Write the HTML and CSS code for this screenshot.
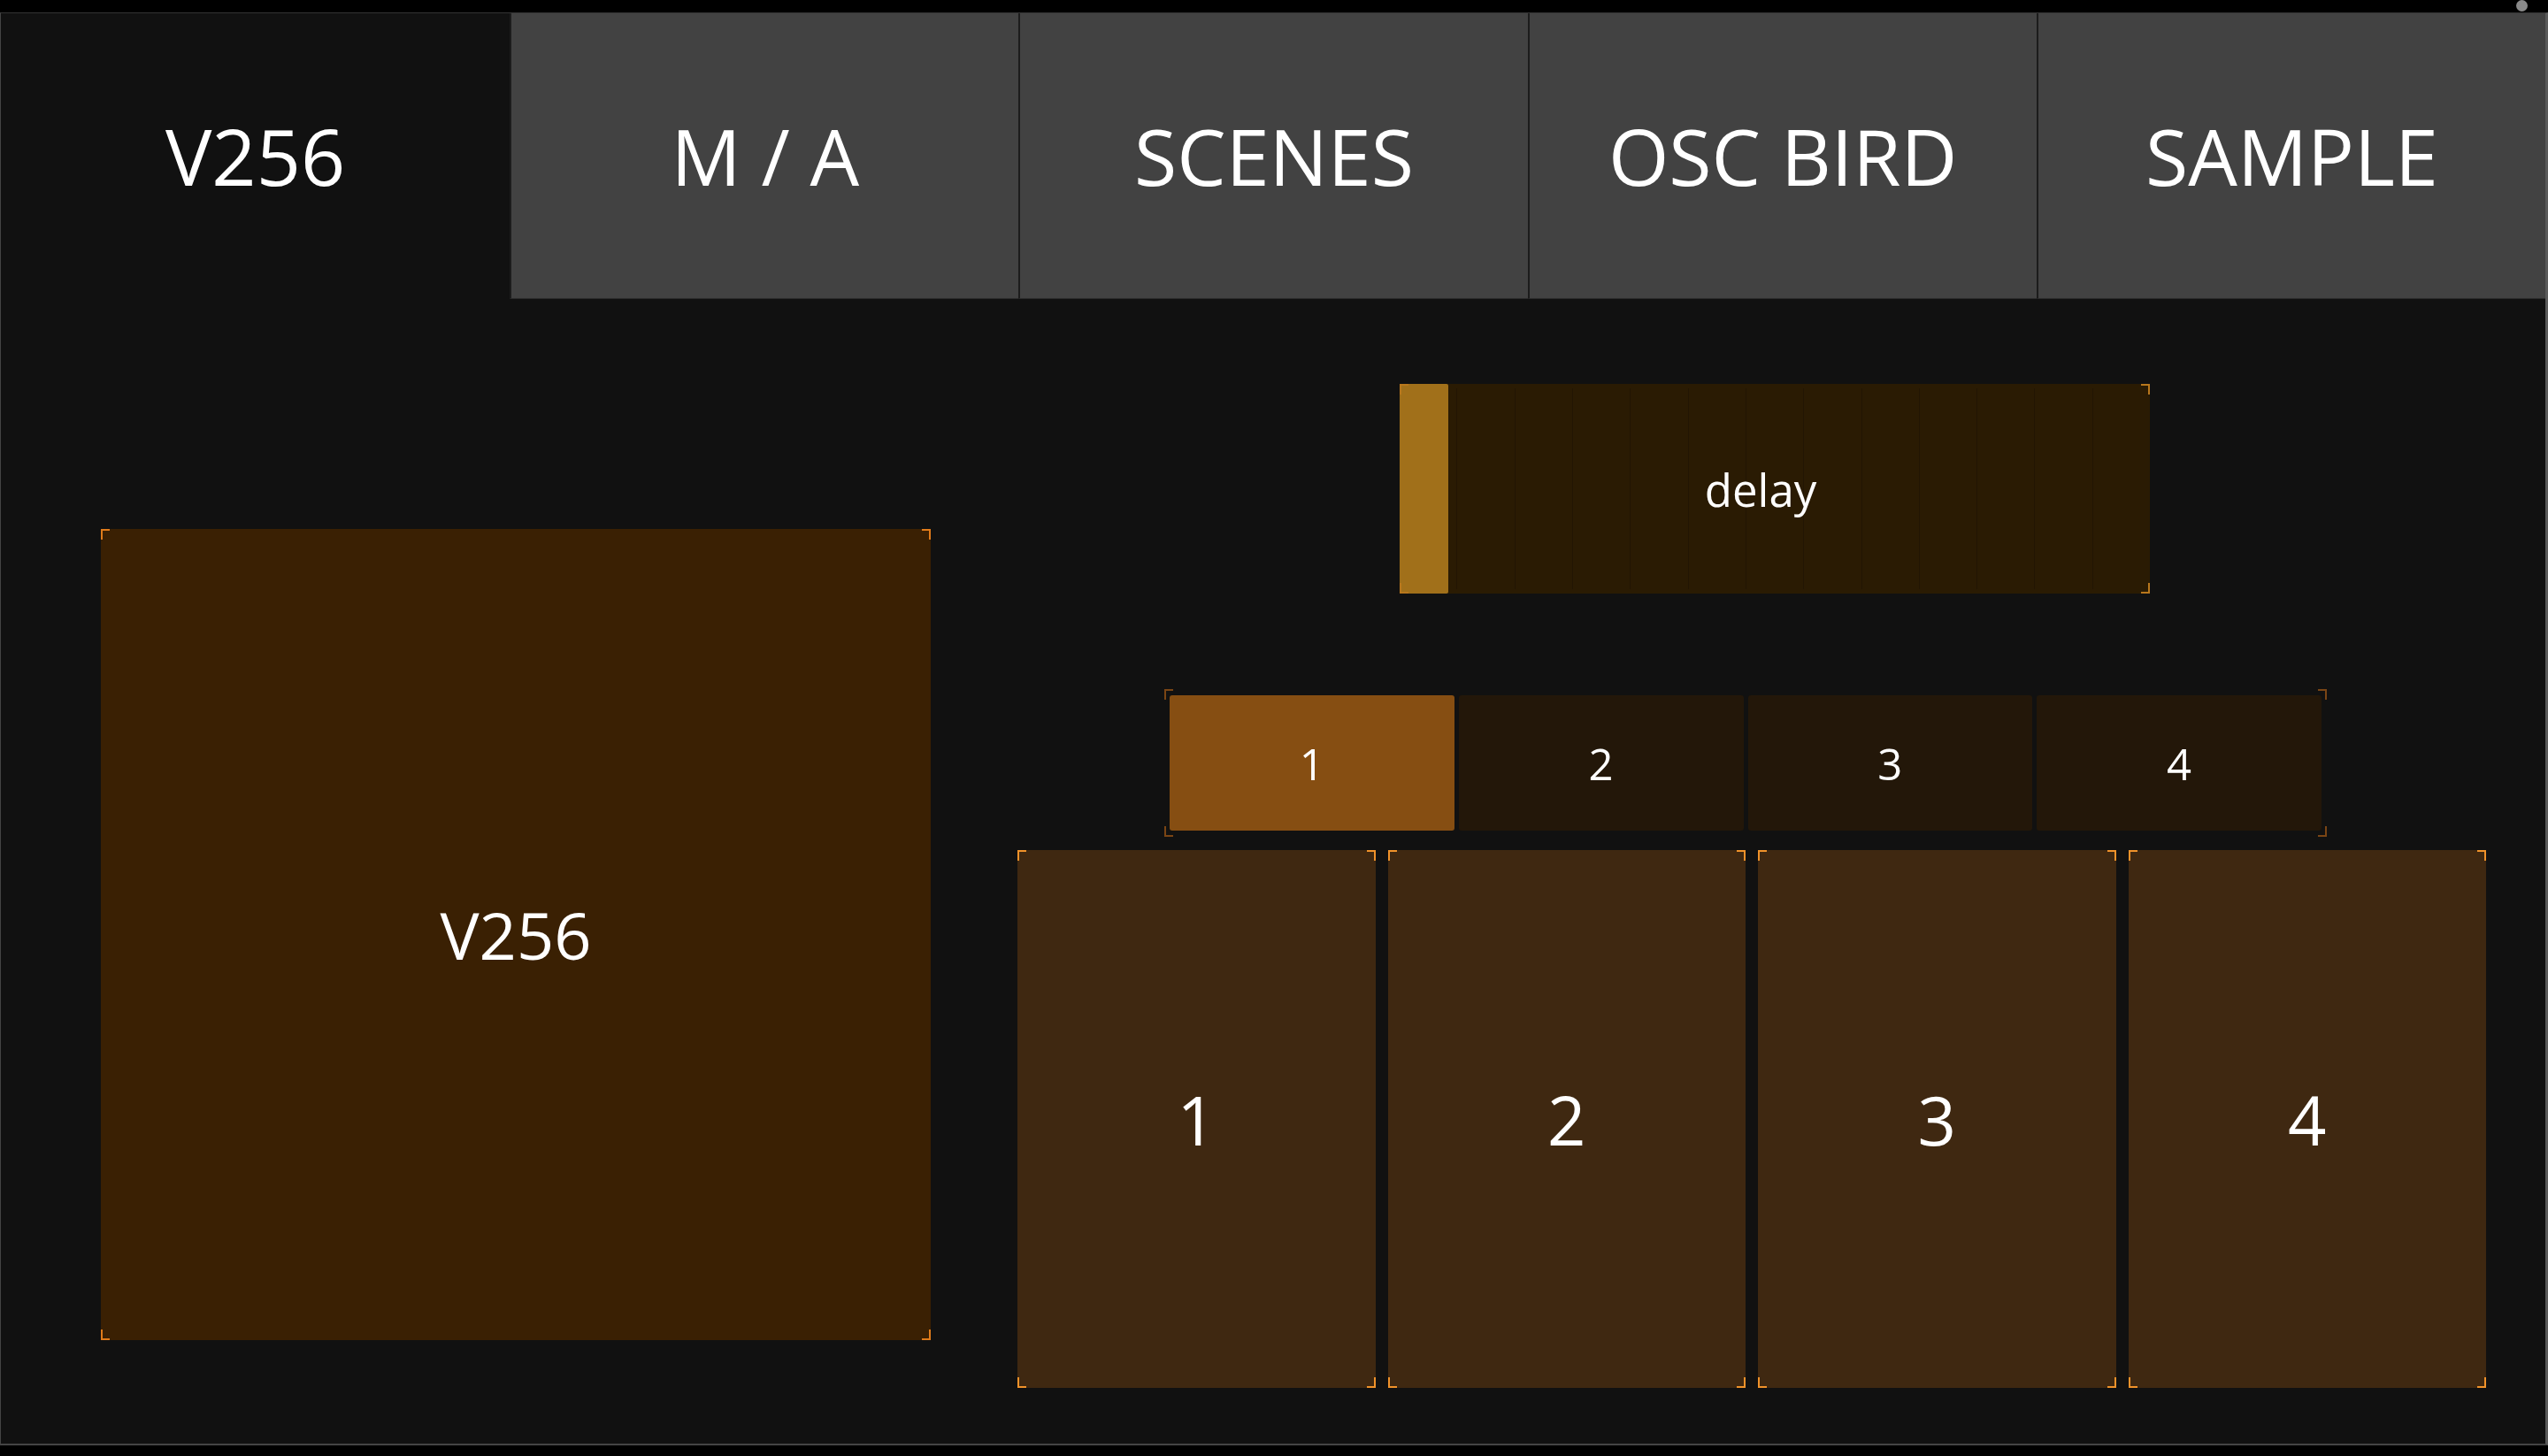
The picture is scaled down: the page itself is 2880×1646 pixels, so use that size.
FILE: index.html
```html
<!DOCTYPE html>
<html lang="en">
<head>
  <meta charset="UTF-8" />
  <title>V256 - Control Surface</title>
  <link rel="stylesheet" href="styles.css">
</head>
<body>

  <div class="topbar">
    <span class="dot"></span>
  </div>

  <div class="panel">
    <nav class="tabs">
      <div class="tab active">V256</div>
      <div class="tab">M / A</div>
      <div class="tab">SCENES</div>
      <div class="tab">OSC BIRD</div>
      <div class="tab">SAMPLE</div>
    </nav>

    <div class="stage">
      <div class="col-left">
        <div class="big-pad corners">V256</div>
      </div>

      <div class="col-right">
        <div class="fader corners">
          <div class="ticks">
            <span></span><span></span><span></span><span></span><span></span>
            <span></span><span></span><span></span><span></span><span></span>
            <span></span><span></span><span></span>
          </div>
          <div class="fill" style="width: 55px"></div>
          <div class="fader-label">delay</div>
        </div>

        <div class="segment corners">
          <div class="seg on">1</div>
          <div class="seg">2</div>
          <div class="seg">3</div>
          <div class="seg">4</div>
        </div>

        <div class="pads">
          <div class="pad corners">1</div>
          <div class="pad corners">2</div>
          <div class="pad corners">3</div>
          <div class="pad corners">4</div>
        </div>
      </div>
    </div>
  </div>

</body>
</html>
```

FILE: styles.css
```css
body {
  font-family: 'Open Sans', 'Noto Sans', sans-serif;
  background: #000;
  color: white;
  margin: 0;
  padding: 0;
  height: 1646px;
  overflow: hidden;
}

.topbar {
  height: 14px;
  display: flex;
  justify-content: flex-end;
  padding-right: 23px;
}

.dot {
  width: 13px;
  height: 13px;
  border-radius: 50%;
  background: #8a8a8a;
}

.panel {
  height: 1617px;
  background: #111;
  border-top: 1px solid #333;
  border-left: 1px solid #444;
  border-right: 3px solid #5a5a5a;
  border-bottom: 2px solid #444;
}

/* tabs */

.tabs {
  display: grid;
  grid-template-columns: repeat(5, 1fr);
  height: 323px;
}

.tab {
  background: #424242;
  border-left: 2px solid #1c1c1c;
  border-bottom: 1px solid #2c2c2c;
  display: flex;
  align-items: center;
  justify-content: center;
  font-size: 88px;
}

.tab.active {
  background: #111;
  border-left: none;
  border-bottom-color: #111;
}

/* canvas */

.stage {
  display: flex;
  gap: 98px;
  padding-left: 113px;
}

.col-left {
  padding-top: 260px;
}

.big-pad {
  width: 938px;
  height: 917px;
  background: #3a2003;
  display: flex;
  align-items: center;
  justify-content: center;
  font-size: 74px;
  --c: #e07b1a;
}

.col-right {
  width: 1660px;
  padding-top: 96px;
  display: flex;
  flex-direction: column;
}

/* fader */

.fader {
  margin-left: 432px;
  width: 848px;
  height: 237px;
  background: #2a1b03;
  display: grid;
  --c: #b8771c;
}

.fader > * {
  grid-area: 1 / 1;
}

.ticks {
  display: flex;
  padding: 5px 0;
}

.ticks span {
  flex: 1;
  border-right: 1px solid #221503;
}

.ticks span:last-child {
  border-right: none;
}

.fill {
  background: #a1701a;
  border-radius: 2px;
}

.fader-label {
  display: flex;
  align-items: center;
  justify-content: center;
  padding-right: 32px;
  font-size: 51px;
}

/* segment */

.segment {
  margin-top: 108px;
  margin-left: 166px;
  width: 1302px;
  height: 153px;
  padding: 7px 6px;
  display: grid;
  grid-template-columns: repeat(4, 1fr);
  gap: 5px;
  --c: #7a4514;
}

.seg {
  background: #231709;
  border-radius: 3px;
  display: flex;
  align-items: center;
  justify-content: center;
  font-size: 49px;
}

.seg.on {
  background: #864e12;
}

/* pads */

.pads {
  margin-top: 15px;
  display: grid;
  grid-template-columns: repeat(4, 1fr);
  gap: 14px;
}

.pad {
  height: 608px;
  background: #3f2811;
  display: flex;
  align-items: center;
  justify-content: center;
  font-size: 76px;
  --c: #f0922a;
}

/* corner brackets */

.corners {
  position: relative;
}

.corners::after {
  content: "";
  position: absolute;
  inset: 0;
  pointer-events: none;
  background:
    linear-gradient(var(--c), var(--c)) left top / 10px 2px,
    linear-gradient(var(--c), var(--c)) left top / 2px 12px,
    linear-gradient(var(--c), var(--c)) right top / 10px 2px,
    linear-gradient(var(--c), var(--c)) right top / 2px 12px,
    linear-gradient(var(--c), var(--c)) left bottom / 10px 2px,
    linear-gradient(var(--c), var(--c)) left bottom / 2px 12px,
    linear-gradient(var(--c), var(--c)) right bottom / 10px 2px,
    linear-gradient(var(--c), var(--c)) right bottom / 2px 12px;
  background-repeat: no-repeat;
}
```
